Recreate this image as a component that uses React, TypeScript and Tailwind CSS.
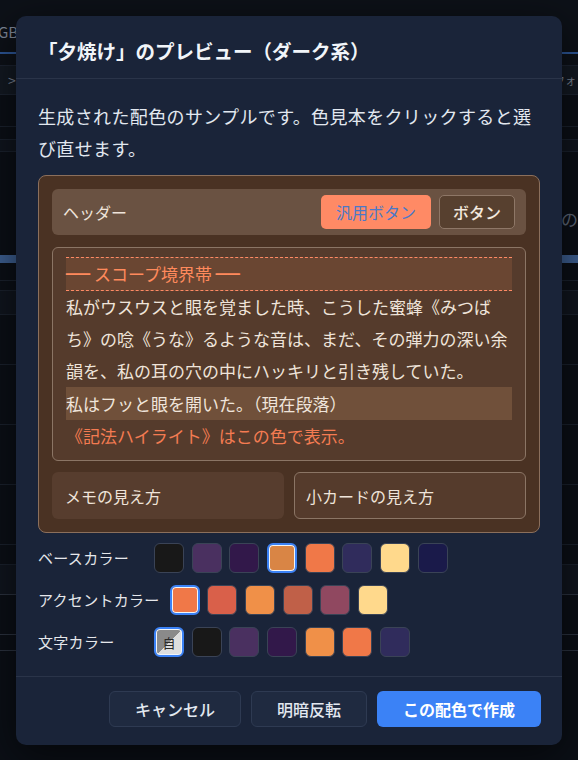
import clsx from "clsx";

const baseColors = ["#181818", "#4a3060", "#32184a", "#d98545", "#f07848", "#302c5c", "#ffd98c", "#1a1a4a"];
const accentColors = ["#f07848", "#d9604a", "#f09048", "#c06048", "#904860", "#ffd98c"];
const textColors = ["auto", "#181818", "#4a3060", "#32184a", "#f09048", "#f07848", "#302c5c"];

const Swatch = ({ color, selected }: { color: string; selected?: boolean }) => {
  const isAuto = color === "auto";
  return (
    <button
      className={clsx(
        "w-[30px] h-[30px] rounded-[6px] shrink-0 flex items-center justify-center",
        selected
          ? "border-2 border-[#3b82f6] shadow-[inset_0_0_0_1px_#f1f5f9]"
          : "border border-[#3a4356]",
        isAuto && "bg-[linear-gradient(135deg,#8a8a8a_50%,#dedede_50%)]"
      )}
      style={isAuto ? undefined : { backgroundColor: color }}
    >
      {isAuto && <span className="text-[13px] leading-none text-[#2a2a2a]">自</span>}
    </button>
  );
};

const SwatchRow = ({ label, colors, selected }: { label: string; colors: string[]; selected: number }) => (
  <div className="flex items-center">
    <span className="min-w-[106px] text-[15px] tracking-[0.02em] text-[#e5e7eb]">{label}</span>
    <div className="ml-[10px] flex gap-[7.7px]">
      {colors.map((c, i) => (
        <Swatch key={i} color={c} selected={i === selected} />
      ))}
    </div>
  </div>
);

// the app page that sits behind the dialog
const Background = () => (
  <div className="text-[#7d8696]">
    <div className="h-[52px] flex items-end pb-[9px] bg-[#0d1118]">
      <span className="-ml-[2px] text-[15px] leading-[22px]">GB</span>
    </div>
    <div className="h-[2px] bg-[#2c5596]" />
    <div className="h-[11px] bg-[#0d1118]" />
    <div className="h-[30px] flex items-center justify-between pl-[8px] pr-[2px] bg-[#131922] border-y border-[#1c2330]">
      <span className="text-[14px]">&gt;</span>
      <span className="text-[11px]">フォ</span>
    </div>
    <div className="h-[32px] border-b border-[#1a212d] bg-[#0b0f16]" />
    <div className="h-[13px] border-b border-[#1a212d] bg-[#0b0f16]" />
    <div className="h-[12px] border-b border-[#1a212d] bg-[#10151e]" />
    <div className="h-[103px] flex items-end justify-end pb-[24px] bg-[#0b0f16]">
      <span className="text-[17px] leading-[24px] text-[#5d6676]">の</span>
    </div>
    <div className="h-[8px] bg-[#3d5f91]" />
    <div className="h-[18px] border-b border-[#1a212d] bg-[#0b0f16]" />
    <div className="h-[10px] border-b border-[#1a212d] bg-[#0b0f16]" />
    <div className="h-[24px] bg-[#10151e] border-b border-[#1a212d]" />
    <div className="h-[50px] border-b border-[#1a212d] bg-[#0b0f16]" />
    <div className="h-[60px] border-b border-[#1a212d] bg-[#0b0f16]" />
    <div className="h-[60px] border-b border-[#1a212d] bg-[#0b0f16]" />
    <div className="h-[60px] border-b border-[#1a212d] bg-[#0b0f16]" />
    <div className="h-[20px] border-b border-[#1a212d] bg-[#0b0f16]" />
    <div className="h-[30px] border-b border-[#2b323f] bg-[#10151e]" />
    <div className="h-[40px] border-b border-[#2b323f] bg-[#0b0f16]" />
    <div className="h-[16px] border-b border-[#2b323f] bg-[#0b0f16]" />
    <div className="h-[100px] bg-[#0b0f16]" />
  </div>
);

export default function App() {
  return (
    <div className="relative h-[760px] w-full overflow-hidden bg-[#0b0f16] font-['Noto_Sans_CJK_JP','Noto_Sans',sans-serif]">
      <Background />

      <div className="absolute left-[16px] top-[16px] w-[546px] rounded-[10px] bg-[#1a2439] shadow-[0_10px_40px_rgba(0,0,0,0.6)]">
        <div className="px-[22px] pt-[21px] pb-[13px] border-b border-[#2a3449]">
          <h2 className="text-[19.5px] leading-[28px] font-bold text-[#f1f5f9]">
            「夕焼け」のプレビュー（ダーク系）
          </h2>
        </div>

        <div className="px-[22px] pt-[21px] pb-[19px]">
          <p className="text-[18px] leading-[32px] tracking-[0.02em] text-[#e2e8f0]">
            生成された配色のサンプルです。色見本をクリックすると選び直せます。
          </p>

          <div className="mt-[11px] rounded-[8px] border border-[#8b6f5c] bg-[#4a3223] p-[13px] flex flex-col">
            <div className="flex items-center justify-between rounded-[6px] bg-[#6a5242] pl-[11px] pr-[11px] py-[6px]">
              <span className="text-[16px] text-[#efe4da]">ヘッダー</span>
              <div className="flex gap-[8px]">
                <button className="h-[34px] rounded-[5px] bg-[#ff8a65] px-[15px] text-[16px] text-[#4a78c8]">
                  汎用ボタン
                </button>
                <button className="h-[34px] rounded-[5px] border border-[#8e7767] bg-[#57402f] px-[13px] text-[16px] font-medium text-[#f3e9df]">
                  ボタン
                </button>
              </div>
            </div>

            <div className="mt-[12px] rounded-[6px] border border-[#8b7565] bg-[#553b2c] px-[13px] pt-[9px] pb-[8px]">
              <div className="h-[34px] flex items-center border-y border-dashed border-[#ff8a65] bg-[#6a4632] text-[17px] text-[#ff8a5c]">
                <span className="font-['DejaVu_Sans'] font-bold text-[20px] leading-none">──</span>
                <span>&nbsp;スコープ境界帯&nbsp;</span>
                <span className="font-['DejaVu_Sans'] font-bold text-[20px] leading-none">──</span>
              </div>
              <p className="text-[17px] leading-[32px] text-[#efe4da]">
                私がウスウスと眼を覚ました時、こうした蜜蜂《みつばち》の唸《うな》るような音は、まだ、その弾力の深い余韻を、私の耳の穴の中にハッキリと引き残していた。
              </p>
              <p className="h-[33px] flex items-center bg-[#70503a] text-[17px] text-[#efe4da]">
                私はフッと眼を開いた。（現在段落）
              </p>
              <p className="text-[17px] leading-[32px] text-[#f47b52]">《記法ハイライト》はこの色で表示。</p>
            </div>

            <div className="mt-[11px] grid grid-cols-2 gap-[10px]">
              <div className="h-[47px] flex items-center rounded-[6px] bg-[#573d2e] px-[13px] text-[16px] text-[#efe4da]">
                メモの見え方
              </div>
              <div className="h-[47px] flex items-center rounded-[6px] border border-[#8b7565] bg-[#553b2c] px-[11px] text-[16px] text-[#efe4da]">
                小カードの見え方
              </div>
            </div>
          </div>

          <div className="mt-[10px] flex flex-col gap-[12px]">
            <SwatchRow label="ベースカラー" colors={baseColors} selected={3} />
            <SwatchRow label="アクセントカラー" colors={accentColors} selected={0} />
            <SwatchRow label="文字カラー" colors={textColors} selected={0} />
          </div>
        </div>

        <div className="flex justify-end gap-[10px] border-t border-[#2a3449] px-[21px] pt-[14px] pb-[18px]">
          <button className="h-[36px] rounded-[6px] border border-[#2e3a52] bg-[#1f2a40] px-[25px] text-[16px] font-medium text-[#e2e8f0]">
            キャンセル
          </button>
          <button className="h-[36px] rounded-[6px] border border-[#2e3a52] bg-[#1f2a40] px-[25px] text-[16px] font-medium text-[#e2e8f0]">
            明暗反転
          </button>
          <button className="h-[36px] rounded-[6px] bg-[#3b82f6] px-[26px] text-[16px] font-bold text-white">
            この配色で作成
          </button>
        </div>
      </div>
    </div>
  );
}
